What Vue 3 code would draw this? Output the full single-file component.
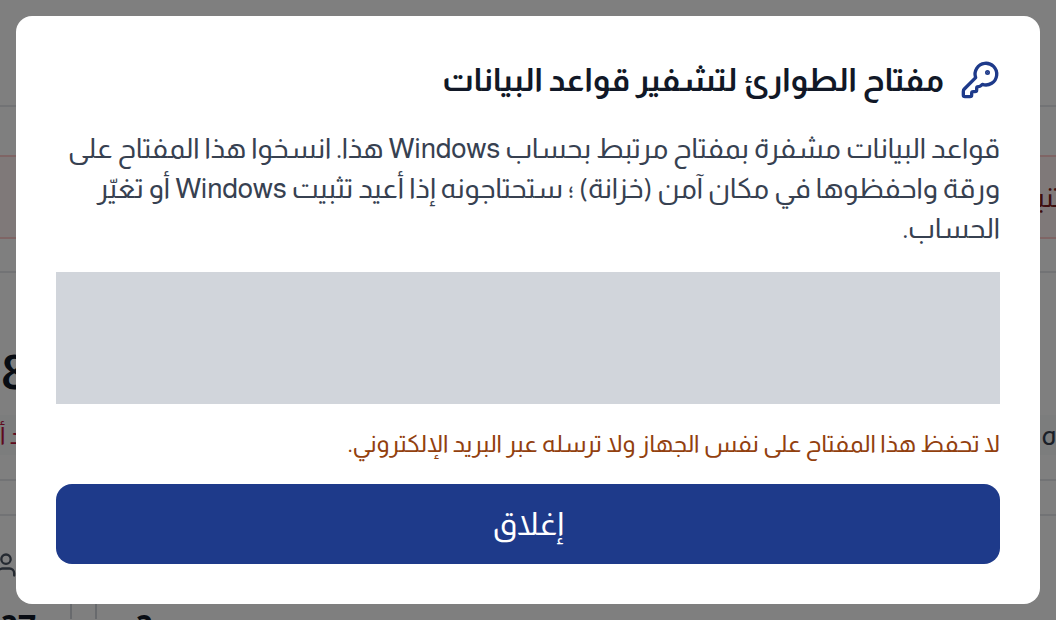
<script setup>
</script>

<template>
  <div class="page" dir="rtl">
    <div class="backdrop" aria-hidden="true">
      <div class="band top"></div>
      <div class="alert"><span class="alert-text">تنبيه</span></div>
      <div class="band spacer"></div>
      <div class="stats">
        <span class="big">8</span>
      </div>
      <div class="hint-row">
        <span class="hint-right">ه</span>
        <span class="hint-left">قد أ</span>
      </div>
      <div class="band first"></div>
      <div class="band second"></div>
      <div class="people">
        <svg class="person" viewBox="0 0 24 24" fill="none" stroke="currentColor" stroke-width="2" stroke-linecap="round" stroke-linejoin="round"><path d="M19 21v-2a4 4 0 0 0-4-4H9a4 4 0 0 0-4 4v2"/><circle cx="12" cy="7" r="4"/></svg>
      </div>
      <div class="numbers">
        <span class="num first-num">27</span>
        <span class="cell-rule"></span>
        <span class="num second-num">2</span>
      </div>
    </div>
    <div class="overlay"></div>
    <section class="modal">
      <header class="head">
        <svg class="key" viewBox="0 0 24 24" fill="none" stroke="currentColor" stroke-width="2" stroke-linecap="round" stroke-linejoin="round">
          <path d="M2.586 17.414A2 2 0 0 0 2 18.828V21a1 1 0 0 0 1 1h3a1 1 0 0 0 1-1v-1a1 1 0 0 1 1-1h1a1 1 0 0 0 1-1v-1a1 1 0 0 1 1-1h.172a2 2 0 0 0 1.414-.586l.814-.814a6.5 6.5 0 1 0-4-4z"/>
          <circle cx="16.5" cy="7.5" r=".5" fill="currentColor"/>
        </svg>
        <h2 class="title">مفتاح الطوارئ لتشفير قواعد البيانات</h2>
      </header>
      <p class="body">قواعد البيانات مشفرة بمفتاح مرتبط بحساب Windows هذا. انسخوا هذا المفتاح على ورقة واحفظوها في مكان آمن (خزانة) ؛ ستحتاجونه إذا أعيد تثبيت Windows أو تغيّر الحساب.</p>
      <div class="keybox"></div>
      <p class="warn">لا تحفظ هذا المفتاح على نفس الجهاز ولا ترسله عبر البريد الإلكتروني.</p>
      <button class="close" type="button">إغلاق</button>
    </section>
  </div>
</template>

<style>
html, body { margin: 0; background: #fff; overflow: hidden; }
</style>

<style scoped>
.page {
  position: relative;
  width: 1056px;
  height: 620px;
  overflow: hidden;
  box-sizing: border-box;
  padding: 16px;
  font-family: "Almarai", "Noto Sans", "DejaVu Sans", sans-serif;
}
.backdrop {
  position: absolute;
  inset: 0;
  background: #fff;
  display: flex;
  flex-direction: column;
}
.band { border-bottom: 2px solid #e5e7eb; box-sizing: border-box; flex: none; }
.band.top { height: 107px; }
.alert {
  margin-top: 48px;
  height: 84px;
  flex: none;
  box-sizing: border-box;
  background: #fef2f2;
  border-top: 2px solid #fecaca;
  border-bottom: 2px solid #fecaca;
  display: flex;
  align-items: center;
  color: #7f1d1d;
  font-size: 28px;
}
.alert-text { margin-right: -6px; }
.band.spacer { height: 34px; }
.stats { height: 142px; flex: none; display: flex; justify-content: flex-end; align-items: flex-end; }
.big { font-size: 48px; font-weight: 700; color: #111827; line-height: 56px; margin-bottom: 14px; margin-left: 1px; }
.hint-row {
  height: 40px;
  flex: none;
  display: flex;
  justify-content: space-between;
  align-items: center;
  background: #f9fafb;
  font-size: 28px;
}
.hint-right { color: #374151; }
.hint-left { color: #be123c; font-size: 24px; }
.band.first { height: 26px; }
.band.second { height: 35px; }
.people { height: 87px; flex: none; display: flex; justify-content: flex-end; align-items: center; color: #4b5563; }
.person { width: 28px; height: 28px; margin-left: -8px; margin-top: 10px; }
.numbers {
  height: 36px;
  flex: none;
  display: flex;
  direction: ltr;
  font-size: 36px;
  font-weight: 700;
  color: #111827;
  line-height: 36px;
  padding-top: 8px;
  box-sizing: border-box;
}
.num { display: block; }
.first-num { width: 70px; }
.cell-rule { width: 27px; height: 16px; margin-top: -8px; border-left: 2px solid #d1d5db; border-right: 2px solid #d1d5db; box-sizing: border-box; }
.second-num { margin-left: 38px; }
.overlay { position: absolute; inset: 0; background: rgba(0, 0, 0, 0.5); }
.modal {
  position: relative;
  box-sizing: border-box;
  height: 588px;
  background: #fff;
  border-radius: 16px;
  padding: 40px;
  display: flex;
  flex-direction: column;
}
.head { display: flex; align-items: center; gap: 16px; height: 48px; color: #1e3a8a; }
.key { width: 40px; height: 40px; flex: none; }
.title { margin: 0; font-size: 32px; font-weight: 700; color: #111827; line-height: 48px; }
.body { margin: 25px 0 23px; font-size: 28px; line-height: 40px; color: #374151; height: 120px; }
.keybox { height: 132px; background: #d1d5db; flex: none; }
.warn { margin: 24px 0; font-size: 24px; line-height: 32px; height: 32px; color: #92400e; }
.close {
  height: 80px;
  flex: none;
  border: 0;
  border-radius: 16px;
  background: #1e3a8a;
  color: #fff;
  font: inherit;
  font-size: 32px;
}
</style>
